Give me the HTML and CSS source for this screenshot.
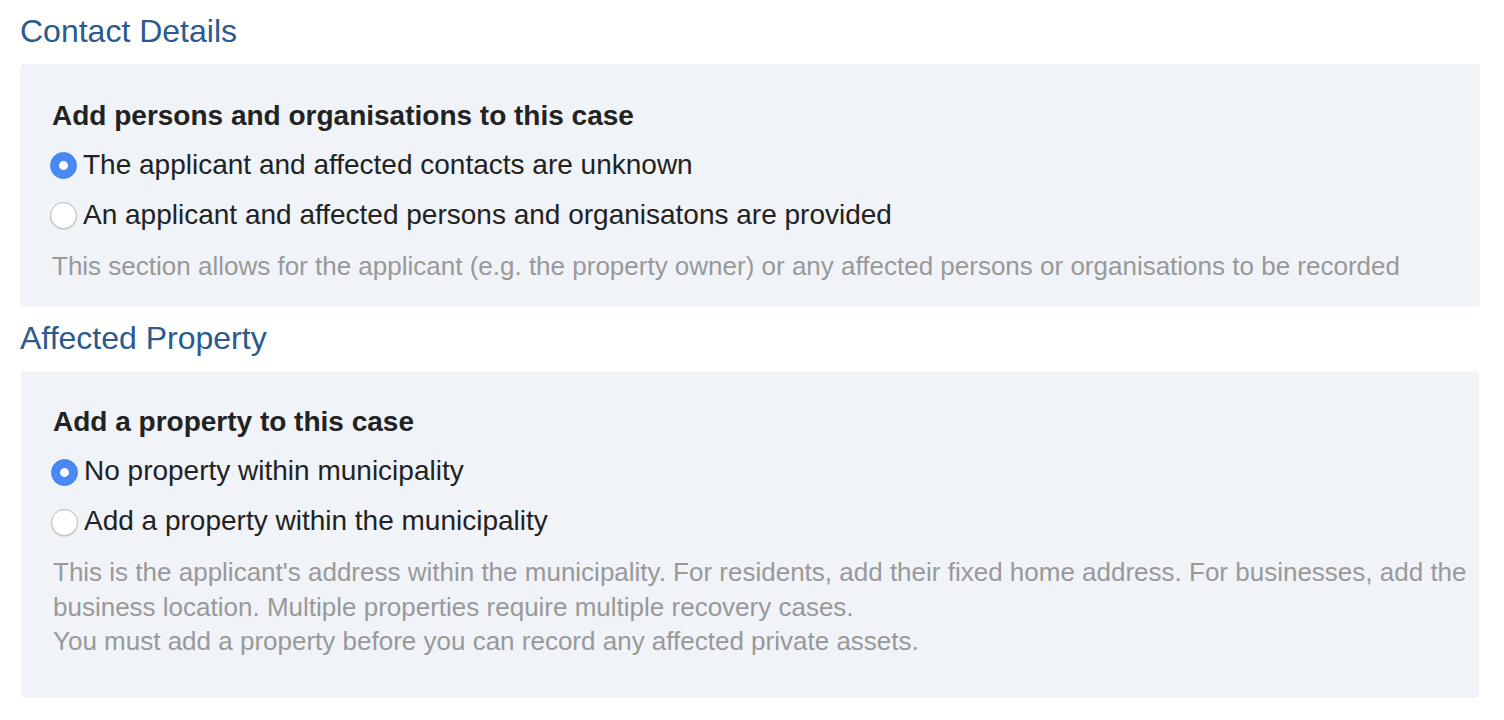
FILE: index.html
```html
<!DOCTYPE html>
<html lang="en">
<head>
<meta charset="utf-8">
<title>Contact Details</title>
<link rel="stylesheet" href="styles.css">
</head>
<body>
<div class="page">
  <h3 class="section-title">Contact Details</h3>
  <div class="panel">
    <div class="panel-heading">Add persons and organisations to this case</div>
    <div class="options">
      <label class="radio"><input type="radio" name="contacts" checked><span>The applicant and affected contacts are unknown</span></label>
      <label class="radio"><input type="radio" name="contacts"><span>An applicant and affected persons and organisatons are provided</span></label>
    </div>
    <p class="help">This section allows for the applicant (e.g. the property owner) or any affected persons or organisations to be recorded</p>
  </div>

  <h3 class="section-title">Affected Property</h3>
  <div class="panel panel-property">
    <div class="panel-heading">Add a property to this case</div>
    <div class="options">
      <label class="radio"><input type="radio" name="property" checked><span>No property within municipality</span></label>
      <label class="radio"><input type="radio" name="property"><span>Add a property within the municipality</span></label>
    </div>
    <p class="help">This is the applicant's address within the municipality. For residents, add their fixed home address. For businesses, add the business location. Multiple properties require multiple recovery cases.<br>You must add a property before you can record any affected private assets.</p>
  </div>
</div>
</body>
</html>
```

FILE: styles.css
```css
* { box-sizing: border-box; }

html, body {
  margin: 0;
  padding: 0;
  background: #ffffff;
}

body {
  font-family: "Liberation Sans", Arial, Helvetica, sans-serif;
  color: #222222;
}

.page {
  padding: 0 24px 0 20px;
  display: flex;
  flex-direction: column;
}

.section-title {
  margin: 14px 0 15px 0;
  font-size: 32px;
  line-height: 35px;
  font-weight: 400;
  color: #2a5a8e;
}

.panel + .section-title {
  margin-top: 14px;
}

.panel {
  background: #f0f3f8;
  border-radius: 4px;
  padding: 31.5px 10px 23.5px 32px;
  display: flex;
  flex-direction: column;
}

.panel-property {
  margin-left: 1px;
  margin-right: 1px;
  padding-bottom: 39.5px;
}

.panel-heading {
  font-size: 28px;
  line-height: 40px;
  font-weight: 700;
  color: #222222;
  margin-bottom: 9px;
}

.options {
  display: flex;
  flex-direction: column;
  gap: 10px;
}

.radio {
  display: flex;
  align-items: center;
  gap: 6px;
  font-size: 28px;
  line-height: 40px;
  color: #222222;
  margin-left: -2px;
  cursor: pointer;
}

.radio input {
  -webkit-appearance: none;
  appearance: none;
  margin: 2px 0 0 0;
  width: 27px;
  height: 27px;
  border-radius: 50%;
  border: 1px solid #b9b9b9;
  background: #ffffff;
  box-shadow: 0 1px 1px rgba(0, 0, 0, 0.12);
  flex: 0 0 auto;
}

.radio input:checked {
  border-color: #3e7ff0;
  background: radial-gradient(circle at center, #ffffff 0, #ffffff 4px, #4a88f3 4.8px, #4a88f3 100%);
  box-shadow: none;
}

.help {
  margin: 14px 0 0 0;
  font-size: 26px;
  line-height: 34.5px;
  color: #999999;
}
```
